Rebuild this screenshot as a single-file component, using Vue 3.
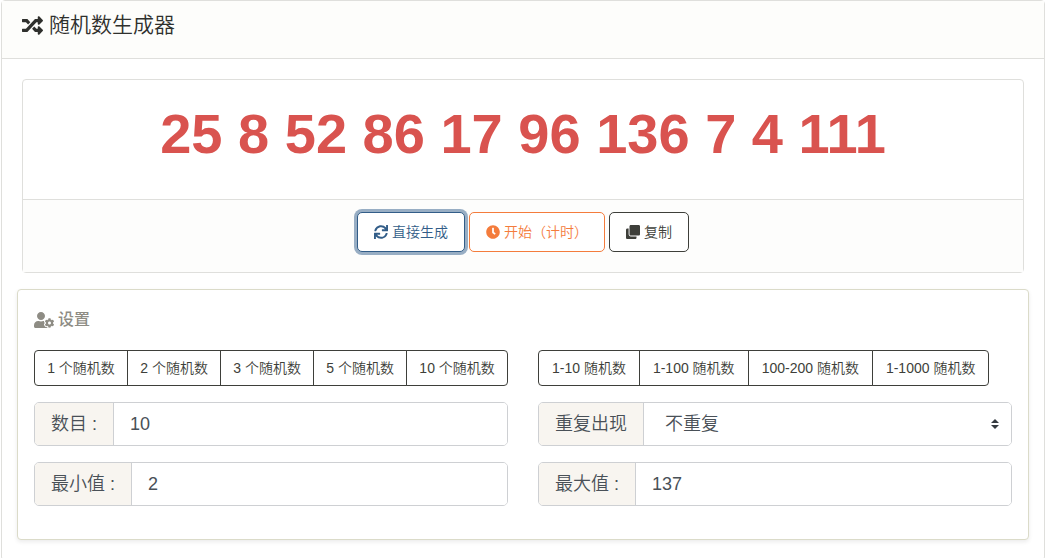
<script setup>
import { ref, reactive } from 'vue'

const icons = {
  random: 'M504.971 359.029c9.373 9.373 9.373 24.569 0 33.941l-80 79.984c-15.01 15.01-40.971 4.49-40.971-16.971V416h-58.785a12.004 12.004 0 0 1-8.773-3.812l-70.556-75.596 53.333-57.143L352 336h32v-39.981c0-21.438 25.943-31.998 40.971-16.971l80 79.981zM12 176h84l52.781 56.551 53.333-57.143-70.556-75.596A11.999 11.999 0 0 0 122.785 96H12c-6.627 0-12 5.373-12 12v56c0 6.627 5.373 12 12 12zm372 0v39.984c0 21.46 25.961 31.98 40.971 16.971l80-79.984c9.373-9.373 9.373-24.569 0-33.941l-80-79.981C409.943 24.021 384 34.582 384 56.019V96h-58.785a12.004 12.004 0 0 0-8.773 3.812L96 336H12c-6.627 0-12 5.373-12 12v56c0 6.627 5.373 12 12 12h110.785c3.326 0 6.503-1.381 8.773-3.812L352 176h32z',
  sync: 'M440.65 12.57l4 82.77A247.16 247.16 0 0 0 255.83 8C134.73 8 33.91 94.92 12.29 209.82A12 12 0 0 0 24.09 224h49.05a12 12 0 0 0 11.67-9.26 175.91 175.91 0 0 1 317-56.94l-101.46-4.86a12 12 0 0 0-12.57 12v47.41a12 12 0 0 0 12 12H500a12 12 0 0 0 12-12V12a12 12 0 0 0-12-12h-47.37a12 12 0 0 0-11.98 12.57zM255.83 432a175.61 175.61 0 0 1-146-77.8l101.8 4.87a12 12 0 0 0 12.57-12v-47.4a12 12 0 0 0-12-12H12a12 12 0 0 0-12 12V500a12 12 0 0 0 12 12h47.35a12 12 0 0 0 12-12.6l-4.15-82.57A247.17 247.17 0 0 0 255.83 504c121.11 0 221.93-86.92 243.55-201.82a12 12 0 0 0-11.8-14.18h-49.05a12 12 0 0 0-11.67 9.26A175.86 175.86 0 0 1 255.83 432z',
  clock: 'M256 8C119 8 8 119 8 256s111 248 248 248 248-111 248-248S393 8 256 8zm92.49 313l-20 25a16 16 0 0 1-22.49 2.5l-67-49.72a40 40 0 0 1-15-31.23V112a16 16 0 0 1 16-16h32a16 16 0 0 1 16 16v144l58 42.5a16 16 0 0 1 2.49 22.5z',
  clone: 'M464 0c26.51 0 48 21.49 48 48v288c0 26.51-21.49 48-48 48H176c-26.51 0-48-21.49-48-48V48c0-26.51 21.49-48 48-48h288M176 416c-44.112 0-80-35.888-80-80V128H48c-26.51 0-48 21.49-48 48v288c0 26.51 21.49 48 48 48h288c26.51 0 48-21.49 48-48v-48H176z',
  userCog: 'M610.5 373.3c2.6-14.1 2.6-28.5 0-42.6l25.8-14.9c3-1.7 4.3-5.2 3.3-8.5-6.7-21.6-18.2-41.2-33.2-57.4-2.3-2.5-6-3.1-9-1.4l-25.8 14.9c-10.9-9.3-23.4-16.5-36.9-21.3v-29.8c0-3.4-2.4-6.4-5.7-7.1-22.3-5-45-4.8-66.2 0-3.3.7-5.7 3.7-5.7 7.1v29.8c-13.5 4.8-26 12-36.9 21.3l-25.8-14.9c-2.9-1.7-6.7-1.1-9 1.4-15 16.2-26.5 35.8-33.2 57.4-1 3.3.4 6.8 3.3 8.5l25.8 14.9c-2.6 14.1-2.6 28.5 0 42.6l-25.8 14.9c-3 1.7-4.3 5.2-3.3 8.5 6.7 21.6 18.2 41.1 33.2 57.4 2.3 2.5 6 3.1 9 1.4l25.8-14.9c10.9 9.3 23.4 16.5 36.9 21.3v29.8c0 3.4 2.4 6.4 5.7 7.1 22.3 5 45 4.8 66.2 0 3.3-.7 5.7-3.7 5.7-7.1v-29.8c13.5-4.8 26-12 36.9-21.3l25.8 14.9c2.9 1.7 6.7 1.1 9-1.4 15-16.2 26.5-35.8 33.2-57.4 1-3.3-.4-6.8-3.3-8.5l-25.8-14.9zM496 400.5c-26.8 0-48.5-21.8-48.5-48.5s21.8-48.5 48.5-48.5 48.5 21.8 48.5 48.5-21.7 48.5-48.5 48.5zM224 256c70.7 0 128-57.3 128-128S294.7 0 224 0 96 57.3 96 128s57.3 128 128 128zm201.2 226.5c-2.3-1.2-4.6-2.6-6.8-3.9l-7.9 4.6c-6 3.4-12.8 5.3-19.6 5.3-10.9 0-21.4-4.6-28.9-12.6-18.3-19.8-32.3-43.9-40.2-69.6-5.5-17.7 1.9-36.4 17.9-45.7l7.9-4.6c-.1-2.6-.1-5.2 0-7.8l-7.9-4.6c-16-9.2-23.4-28-17.9-45.7.9-2.9 2.2-5.8 3.2-8.7-3.8-.3-7.5-1.2-11.4-1.2h-16.7c-22.2 10.2-46.9 16-72.9 16s-50.6-5.8-72.9-16h-16.7C60.2 288 0 348.2 0 422.4V464c0 26.5 21.5 48 48 48h352c10.1 0 19.5-3.2 27.2-8.5-1.2-3.8-2-7.7-2-11.8v-9.2z'
}

const counts = [1, 2, 3, 5, 10]
const ranges = [[1, 10], [1, 100], [100, 200], [1, 1000]]

const numbers = ref([25, 8, 52, 86, 17, 96, 136, 7, 4, 111])
const form = reactive({ count: '10', repeat: 'no', min: '2', max: '137' })

let timer = null

function generate() {
  const min = Number(form.min)
  const max = Number(form.max)
  const size = max - min + 1
  if (!(size > 0)) return
  const unique = form.repeat === 'no'
  const total = unique ? Math.min(Number(form.count), size) : Number(form.count)
  const result = []
  while (result.length < total) {
    const n = min + Math.floor(Math.random() * size)
    if (!unique || !result.includes(n)) result.push(n)
  }
  numbers.value = result
}

function toggleTimer() {
  if (timer) {
    clearInterval(timer)
    timer = null
  } else {
    timer = setInterval(generate, 80)
  }
}

function copy() {
  navigator.clipboard?.writeText(numbers.value.join(' '))
}

function setRange([min, max]) {
  form.min = String(min)
  form.max = String(max)
}
</script>

<template>
  <main class="card page">
    <header class="page-header">
      <h1 class="title">
        <svg class="icon" viewBox="0 0 512 512" aria-hidden="true"><path :d="icons.random" /></svg>
        <span>随机数生成器</span>
      </h1>
    </header>

    <div class="page-body">
      <section class="card result">
        <output class="numbers">{{ numbers.join(' ') }}</output>
        <div class="actions">
          <button type="button" class="btn primary" @click="generate">
            <svg class="icon" viewBox="0 0 512 512" aria-hidden="true"><path :d="icons.sync" /></svg>
            <span>直接生成</span>
          </button>
          <button type="button" class="btn warning" @click="toggleTimer">
            <svg class="icon" viewBox="0 0 512 512" aria-hidden="true"><path :d="icons.clock" /></svg>
            <span>开始（计时）</span>
          </button>
          <button type="button" class="btn dark" @click="copy">
            <svg class="icon" viewBox="0 0 512 512" aria-hidden="true"><path :d="icons.clone" /></svg>
            <span>复制</span>
          </button>
        </div>
      </section>

      <section class="card settings">
        <h2 class="subtitle">
          <svg class="icon wide" viewBox="0 0 640 512" aria-hidden="true"><path :d="icons.userCog" /></svg>
          <span>设置</span>
        </h2>
        <div class="grid">
          <div class="group fill">
            <button v-for="n in counts" :key="n" type="button" class="option" @click="form.count = String(n)">{{ n }} 个随机数</button>
          </div>
          <div class="group ranges">
            <button v-for="r in ranges" :key="r[1]" type="button" class="option" @click="setRange(r)">{{ r[0] }}-{{ r[1] }} 随机数</button>
          </div>
          <div class="field">
            <label for="count">数目 :</label>
            <input id="count" v-model="form.count" type="text" inputmode="numeric">
          </div>
          <div class="field">
            <label for="repeat">重复出现</label>
            <select id="repeat" v-model="form.repeat">
              <option value="no">不重复</option>
              <option value="yes">可重复</option>
            </select>
            <svg class="caret" viewBox="0 0 4 5" aria-hidden="true"><path d="M2 0L0 2h4zm0 5L0 3h4z" /></svg>
          </div>
          <div class="field">
            <label for="min">最小值 :</label>
            <input id="min" v-model="form.min" type="text" inputmode="numeric">
          </div>
          <div class="field">
            <label for="max">最大值 :</label>
            <input id="max" v-model="form.max" type="text" inputmode="numeric">
          </div>
        </div>
      </section>
    </div>
  </main>
</template>

<style>
body {
  background: #fff;
  overflow: hidden;
}
</style>

<style scoped>
* {
  box-sizing: border-box;
}

.page,
.page button,
.page input,
.page select {
  font-family: "Liberation Sans", "Noto Sans CJK SC", sans-serif;
  font-weight: 350;
}

.card {
  border: 1px solid #dfdfdc;
  border-radius: 4px;
  background: #fff;
}

.page {
  margin: 0 1px;
  padding-bottom: 20px;
  color: #3e3f3a;
}

.page-header {
  padding: 11px 20px 20px;
  border-bottom: 1px solid #dfdfdc;
  background: #fdfdfb;
}

.title,
.subtitle {
  display: flex;
  align-items: center;
  margin: 0;
}

.title {
  gap: 6px;
  font-size: 21px;
  font-weight: 350;
  line-height: 26px;
  color: #2f302d;
}

.icon {
  flex: none;
  width: 1em;
  height: 1em;
  fill: currentColor;
}

.icon.wide {
  width: 20px;
}

.page-body {
  padding: 20px 15px 0;
}

.result {
  margin: 0 5px 16px;
}

.page .numbers {
  display: block;
  padding: 20px 20px 32px;
  font-size: 56px;
  font-weight: 700;
  line-height: 67px;
  text-align: center;
  color: #d9534f;
}

.actions {
  display: flex;
  flex-wrap: wrap;
  justify-content: center;
  gap: 4px;
  padding: 12px 20px 20px;
  border-top: 1px solid #dfdfdc;
  background: #fdfdfc;
}

.btn {
  display: flex;
  align-items: center;
  gap: 4px;
  height: 40px;
  padding: 0 16px;
  border: 1px solid currentColor;
  border-radius: 5px;
  background: #fff;
  font-size: 14px;
  line-height: 20px;
  cursor: pointer;
}

.primary {
  color: #325d88;
  box-shadow: 0 0 0 3px #98aec4;
}

.warning {
  color: #f47c3c;
}

.dark {
  color: #3e3f3a;
}

.settings {
  padding: 16px 16px 33px;
  border-color: #dbdbc9;
  box-shadow: 0 2px 4px rgba(0, 0, 0, 0.08);
}

.subtitle {
  gap: 4px;
  margin-bottom: 16px;
  font-size: 16px;
  font-weight: 500;
  line-height: 28px;
  color: #8e8c84;
}

.grid {
  display: grid;
  grid-template-columns: 1fr 1fr;
  gap: 16px 30px;
}

.group {
  display: flex;
}

.option {
  height: 36px;
  margin: 0 0 0 -1px;
  padding: 0 12px;
  border: 1px solid #3e3f3a;
  background: #fff;
  color: #3e3f3a;
  font-size: 14px;
  line-height: 20px;
  white-space: nowrap;
  cursor: pointer;
}

.fill .option {
  flex: auto;
}

.ranges .option {
  padding: 0 13px;
}

.option:first-child {
  margin-left: 0;
  border-radius: 4px 0 0 4px;
}

.option:last-child {
  border-radius: 0 4px 4px 0;
}

.field {
  display: flex;
  position: relative;
  height: 44px;
  border: 1px solid #ced0d3;
  border-radius: 5px;
  overflow: hidden;
  font-size: 18px;
  color: #495057;
}

.field label {
  flex: none;
  padding: 0 16px;
  border-right: 1px solid #ced0d3;
  background: #f8f5f0;
  line-height: 42px;
  white-space: nowrap;
}

.field input,
.field select {
  flex: 1;
  min-width: 0;
  margin: 0;
  padding: 0 16px;
  border: 0;
  outline: 0;
  background: #fff;
  color: inherit;
  font-size: inherit;
  appearance: none;
}

.field select {
  padding: 0 32px 0 21px;
}

.caret {
  position: absolute;
  top: 50%;
  right: 12px;
  width: 8px;
  height: 10px;
  margin-top: -5px;
  fill: #343a40;
  pointer-events: none;
}
</style>
